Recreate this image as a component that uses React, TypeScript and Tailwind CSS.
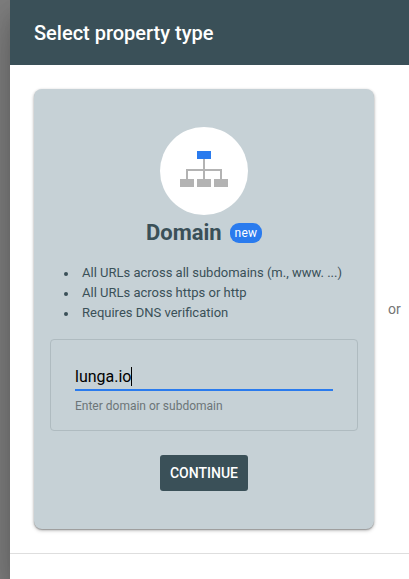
import React from "react";

function SitemapIcon() {
  return (
    <svg width="48" height="36" viewBox="0 0 48 36" shapeRendering="crispEdges" aria-hidden="true">
      <path d="M23 8h2v20h-2zM6 18h36v2H6zM6 20h2v8H6zM40 20h2v8h-2z" fill="#b3b3b3" />
      <path d="M0 28h14v8H0zM17 28h14v8H17zM34 28h14v8H34z" fill="#b3b3b3" />
      <path d="M17 0h14v8H17z" fill="#2a7bee" />
    </svg>
  );
}

const features = [
  "All URLs across all subdomains (m., www. ...)",
  "All URLs across https or http",
  "Requires DNS verification",
];

function DomainCard() {
  return (
    <section className="flex h-[440px] w-[340px] shrink-0 flex-col items-center rounded-lg bg-[#c6d1d6] px-4 pt-[38px] text-[#3a5058] shadow-[0_1px_3px_rgba(0,0,0,0.25),0_1px_1px_rgba(0,0,0,0.2),0_2px_4px_rgba(0,0,0,0.12)]">
      <div className="flex size-[88px] shrink-0 items-center justify-center rounded-full bg-white pb-1">
        <SitemapIcon />
      </div>
      <div className="mt-1 flex h-7 items-center gap-2">
        <h2 className="w-[76px] whitespace-nowrap text-[22px] leading-7 font-bold">Domain</h2>
        <span className="flex h-5 w-8 items-center justify-center rounded-[9px] bg-[#2a7bee] text-xs tracking-[0.3px] text-white">
          new
        </span>
      </div>
      <ul className="mt-4 w-full text-[13px] leading-5">
        {features.map((text) => (
          <li key={text} className="flex items-center whitespace-nowrap pl-[14px]">
            <span className="mt-px mr-[14px] size-1 rounded-full bg-[#3a5058]" />
            {text}
          </li>
        ))}
      </ul>
      <div className="mt-4 h-[92px] w-full shrink-0 rounded border border-[#afbbc0] px-6 pt-[26px]">
        <div className="flex h-[25px] items-start border-b-2 border-[#2a7bee]">
          <span className="text-base leading-[22px] text-black">lunga.io</span>
          <span className="mt-px h-[19px] w-px bg-black" />
        </div>
        <p className="mt-[7px] text-xs leading-4 text-[#6c7578]">Enter domain or subdomain</p>
      </div>
      <button className="mt-6 flex h-9 w-[88px] shrink-0 items-center justify-center rounded-[3px] bg-[#3a5058] text-sm font-medium text-white">
        CONTINUE
      </button>
    </section>
  );
}

export default function App() {
  return (
    <div className="h-[579px] w-[409px] overflow-hidden bg-[#808080] pl-[10px] font-[Roboto,'Liberation_Sans',sans-serif]">
      <main className="flex h-full flex-col bg-white shadow-[0_11px_15px_-7px_rgba(0,0,0,0.2),0_24px_38px_3px_rgba(0,0,0,0.14),0_9px_46px_8px_rgba(0,0,0,0.12)]">
        <header className="flex h-[65px] shrink-0 items-center bg-[#3a5058] pl-6">
          <h1 className="text-xl leading-8 font-medium text-white">Select property type</h1>
        </header>
        <div className="flex h-[489px] shrink-0 items-start border-b border-[#dedede] pt-6 pl-6">
          <DomainCard />
          <span className="mt-[210px] ml-[14px] text-sm leading-5 text-[#757575]">or</span>
        </div>
      </main>
    </div>
  );
}
